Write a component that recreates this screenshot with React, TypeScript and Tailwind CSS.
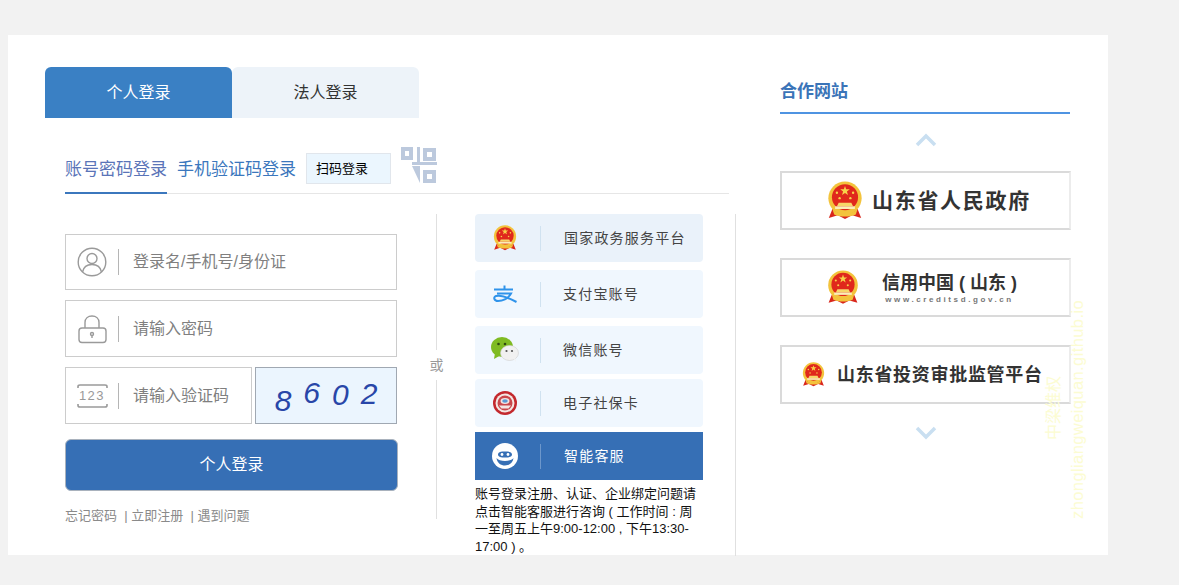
import type { ReactNode } from 'react';

const font = { fontFamily: '"Liberation Sans", "Noto Sans CJK SC", sans-serif' };

function Emblem({ size }: { size: number }) {
  return (
    <svg width={size} height={size * 1.08} viewBox="0 0 40 43">
      <path d="M6 31 L2 41 L12 38 L20 42 L28 38 L38 41 L34 31 Z" fill="#d9261c" />
      <circle cx="20" cy="19" r="18.5" fill="#f3c33c" />
      <circle cx="20" cy="18" r="14.500" fill="#e0281c" />
      <path d="M20 5.500l1.300 3.700h4l-3.200 2.400 1.200 3.800-3.300-2.300-3.300 2.300 1.200-3.800-3.200-2.400h4z" fill="#f7d24a" />
      <circle cx="11" cy="13" r="1.300" fill="#f7d24a" />
      <circle cx="29" cy="13" r="1.300" fill="#f7d24a" />
      <circle cx="14" cy="19" r="1.300" fill="#f7d24a" />
      <circle cx="26" cy="19" r="1.300" fill="#f7d24a" />
      <path d="M11 28 L13 24 H27 L29 28 Z" fill="#f6d76a" />
      <rect x="9" y="28" width="22" height="3" fill="#fbeeb8" />
      <path d="M6 31 C12 38 28 38 34 31 L32 37 C26 40 14 40 8 37 Z" fill="#f3c33c" />
    </svg>
  );
}

function UserIcon() {
  return (
    <svg width="30" height="30" viewBox="0 0 30 30" fill="none" stroke="#9a9a9a" strokeWidth="1.400">
      <circle cx="15" cy="15" r="13.800" />
      <circle cx="15" cy="11.500" r="5" />
      <path d="M5.500 25c1-5 5-7.500 9.500-7.500s8.500 2.500 9.500 7.500" />
    </svg>
  );
}

function LockIcon() {
  return (
    <svg width="30" height="30" viewBox="0 0 30 30" fill="none" stroke="#9a9a9a" strokeWidth="1.400">
      <path d="M8 14V8.500C8 4.500 11 2 15 2s7 2.500 7 6.500V14" />
      <rect x="2" y="14" width="27" height="14.500" rx="3" />
      <circle cx="15" cy="20" r="1.500" />
      <path d="M15 21.500V24" />
    </svg>
  );
}

function CodeIcon() {
  return (
    <div className="relative flex h-[24px] w-[31px] items-center justify-center">
      <svg className="absolute inset-0" width="31" height="24" viewBox="0 0 31 24" fill="none" stroke="#9a9a9a" strokeWidth="1.600">
        <path d="M1 4V2.500Q1 1 3 1H28Q30 1 30 2.500V4" />
        <path d="M1 20V21.500Q1 23 3 23H28Q30 23 30 21.500V20" />
      </svg>
      <span className="text-[13px] leading-none tracking-[1.500px] text-[#999999]">123</span>
    </div>
  );
}

function QrIcon() {
  return (
    <svg width="36" height="36" viewBox="0 0 36 36" fill="#bcc9dd">
      <path d="M0 0H12V13H0ZM4 4V9H8V4Z" fillRule="evenodd" />
      <path d="M16 0H19V15H36V18H11V15H16Z" />
      <path d="M22 1H35V14H22ZM26 5V10H31V5Z" fillRule="evenodd" />
      <path d="M11 19H19V36Z" />
      <path d="M22 23H35V36H22ZM26 27V32H31V27Z" fillRule="evenodd" />
    </svg>
  );
}

function AlipayIcon() {
  return (
    <svg width="24" height="18" viewBox="0 0 24 18" fill="none" stroke="#2f93ea" strokeWidth="2">
      <path d="M1 4.500H20" />
      <path d="M11.500 0.500V5" />
      <path d="M4 8.500H18C15 14 9 16 5 16C1 16 0 12 3 11C8 9.500 16 13 23.500 17" />
    </svg>
  );
}

function WechatIcon() {
  return (
    <svg width="28" height="26" viewBox="0 0 28 26">
      <ellipse cx="11" cy="10" rx="11" ry="10" fill="#7fbb22" />
      <path d="M4 16L3 22L10 18Z" fill="#7fbb22" />
      <circle cx="7.500" cy="7" r="1.300" fill="#2f4a10" />
      <circle cx="14" cy="7" r="1.300" fill="#2f4a10" />
      <ellipse cx="18.500" cy="16" rx="9" ry="7.500" fill="#f1f1f1" stroke="#d0d0d0" strokeWidth="0.600" />
      <path d="M22 21L25 25L24 19Z" fill="#f1f1f1" />
      <circle cx="15.500" cy="14" r="1.100" fill="#555555" />
      <circle cx="21" cy="14" r="1.100" fill="#555555" />
    </svg>
  );
}

function SocialCardIcon() {
  return (
    <svg width="24" height="24" viewBox="0 0 24 24">
      <circle cx="12" cy="12" r="12" fill="#c3282d" />
      <circle cx="12" cy="12" r="9.500" fill="#f4e6e2" />
      <circle cx="12" cy="12" r="7.500" fill="#c9474b" />
      <ellipse cx="12" cy="10" rx="4.500" ry="3" fill="#f4e6e2" />
      <ellipse cx="12" cy="10" rx="2.800" ry="1.800" fill="#5b9bd5" />
      <path d="M6 14.500H18L15.500 17.500H8.500Z" fill="#f4e6e2" />
    </svg>
  );
}

function ServiceIcon() {
  return (
    <svg width="26" height="26" viewBox="0 0 26 26">
      <circle cx="13" cy="13" r="13" fill="#ffffff" />
      <path d="M4.500 15C5 20 9 22.500 13 22.500S21 20 21.500 15C19 19 7 19 4.500 15Z" fill="#366fb5" />
      <path d="M6 11.500C6 9 9 8.500 13 8.500S20 9 20 11.500S17 14.500 13 14.500S6 14 6 11.500Z" fill="#366fb5" />
      <circle cx="10" cy="11.500" r="1.400" fill="#ffffff" />
      <circle cx="16" cy="11.500" r="1.400" fill="#ffffff" />
    </svg>
  );
}

function Field({ icon, label, width, height }: { icon: ReactNode; label: string; width: string; height: string }) {
  return (
    <div className={`flex items-center border border-[#cccccc] bg-white ${height} ${width}`}>
      <div className="flex w-[52px] justify-center">{icon}</div>
      <div className="h-[26px] w-px bg-[#b5b5b5]" />
      <span className="ml-[14px] text-base text-[#807f7f]">{label}</span>
    </div>
  );
}

function Provider({ icon, label, pad, active, top }: { icon: ReactNode; label: string; pad: string; active?: boolean; top?: boolean }) {
  const bg = active ? 'bg-[#366fb5] text-white' : top ? 'bg-[#eaf2fa] rounded text-[#444444]' : 'bg-[#f0f7fe] rounded text-[#444444]';
  return (
    <div className={`flex h-[48px] items-center ${bg}`}>
      <div className="flex w-[65px] justify-center pr-[5px]">{icon}</div>
      <div className={`h-[25px] w-px ${active ? 'bg-[#6d97cb]' : 'bg-[#d0e2f0]'}`} />
      <span className={`text-sm tracking-[1.2px] ${pad}`}>{label}</span>
    </div>
  );
}

function Chevron({ up }: { up?: boolean }) {
  return (
    <svg width="22" height="14" viewBox="0 0 22 14" fill="none" stroke="#c9dff1" strokeWidth="3.500">
      <path d={up ? 'M2 12L11 3L20 12' : 'M2 2L11 11L20 2'} />
    </svg>
  );
}

function Partner({ children }: { children: ReactNode }) {
  return (
    <div className="flex h-[59px] w-[291px] items-center border-2 border-[#dadada] border-r-[#ececec] bg-white">
      {children}
    </div>
  );
}

export default function App() {
  return (
    <div className="relative h-[585px] w-[1179px] overflow-hidden bg-[#f2f2f2] pt-[35px] pl-2" style={font}>
      <div className="relative flex h-[520px] w-[1100px] bg-white pt-8 pl-[37px]">
        {/* Login */}
        <div className="w-[691px]">
          <div className="flex h-[51px] w-[374px]">
            <div className="flex w-[187px] items-center justify-center rounded-t-md bg-[#3a80c4] text-base text-white">个人登录</div>
            <div className="flex w-[187px] items-center justify-center rounded-t-md bg-[#edf3f9] text-base text-[#333333]">法人登录</div>
          </div>

          <div className="ml-5 mt-[27px] flex h-[49px] w-[664px] items-start border-b border-[#e6e6e6]">
            <div className="mt-[12px] h-[37px] w-[102px] border-b-2 border-[#3b77bd] pt-px text-[17px] leading-[24px] text-[#5a74b8]">账号密码登录</div>
            <div className="ml-[10px] mt-[13px] text-[17px] leading-[24px] text-[#3b77bd]">手机验证码登录</div>
            <div className="ml-[10px] mt-[8px] flex h-[31px] w-[85px] items-center border border-[#e1e6ec] bg-[#ebf6fe] pl-[9px] text-[13px] text-black">扫码登录</div>
            <div className="ml-[10px] mt-[2px]"><QrIcon /></div>
          </div>

          <div className="ml-5 mt-[20px] flex h-[342px]">
            <div className="w-[333px] pt-[20px]">
              <div className="flex flex-col gap-[10px]">
                <Field icon={<UserIcon />} label="登录名/手机号/身份证" width="w-[332px]" height="h-[56px]" />
                <Field icon={<LockIcon />} label="请输入密码" width="w-[332px]" height="h-[57px]" />
                <div className="flex gap-[3px]">
                  <Field icon={<CodeIcon />} label="请输入验证码" width="w-[187px]" height="h-[57px]" />
                  <div className="flex h-[57px] w-[142px] items-center justify-center gap-[12px] border border-[#a0a8b2] bg-[#ebf5fe] text-[30px] italic text-[#2846a8]">
                    <span className="translate-y-[5px]">8</span>
                    <span className="-translate-y-[3px]">6</span>
                    <span className="-translate-y-[1px]">0</span>
                    <span className="-translate-y-[2px]">2</span>
                  </div>
                </div>
              </div>
              <button className="mt-[15px] h-[52px] w-[333px] rounded-md border border-[#a9b2bd] bg-[#366fb5] text-base text-white">个人登录</button>
              <div className="mt-[15px] text-[13px] text-[#8a8a8a]">忘记密码 &nbsp;| 立即注册 &nbsp;| 遇到问题</div>
            </div>

            <div className="ml-[38px] flex h-[305px] w-px flex-col items-center bg-[#e0e0e0]">
              <span className="mt-[136px] whitespace-nowrap bg-white py-[5px] text-sm text-[#999999]">或</span>
            </div>

            <div className="ml-[38px] w-[228px]">
              <Provider top icon={<Emblem size={24} />} label="国家政务服务平台" pad="ml-[23px]" />
              <div className="mt-2"><Provider icon={<AlipayIcon />} label="支付宝账号" pad="ml-[22px]" /></div>
              <div className="mt-2"><Provider icon={<WechatIcon />} label="微信账号" pad="ml-[22px]" /></div>
              <div className="mt-[5px]"><Provider icon={<SocialCardIcon />} label="电子社保卡" pad="ml-[22px]" /></div>
              <div className="mt-[5px]"><Provider active icon={<ServiceIcon />} label="智能客服" pad="ml-[23px]" /></div>
              <p className="mt-[5px] w-[224px] text-[13px] leading-[17.5px] text-[#111111]">账号登录注册、认证、企业绑定问题请点击智能客服进行咨询 ( 工作时间 : 周一至周五上午9:00-12:00 , 下午13:30-17:00 ) 。</p>
            </div>

            <div className="ml-[32px] w-px bg-[#e0e0e0]" />
          </div>
        </div>

        {/* Partner sites */}
        <div className="ml-[44px] w-[291px]">
          <div className="mt-[8px] h-[39px] w-[290px] border-b-2 border-[#4f94e2] pt-[2px] text-[17px] leading-[29px] font-bold text-[#3b74b8]">合作网站</div>
          <div className="mt-[19px] ml-px flex w-[290px] justify-center"><Chevron up /></div>
          <div className="mt-[24px] flex flex-col gap-[28px]">
            <Partner>
              <div className="ml-[45px]"><Emblem size={36} /></div>
              <span className="ml-[9px] text-[21px] font-bold tracking-[1.7px] whitespace-nowrap text-[#333333]">山东省人民政府</span>
            </Partner>
            <Partner>
              <div className="ml-[45px]"><Emblem size={32} /></div>
              <div className="ml-[23px] flex flex-col items-center">
                <span className="text-lg leading-[24px] font-bold whitespace-nowrap text-[#333333]">信用中国 ( 山东 )</span>
                <span className="text-[8px] leading-[10px] font-bold tracking-[2.6px] whitespace-nowrap text-[#777777]">www.creditsd.gov.cn</span>
              </div>
            </Partner>
            <Partner>
              <div className="ml-[20px]"><Emblem size={23} /></div>
              <span className="ml-[12px] text-lg font-bold tracking-[0.7px] whitespace-nowrap text-[#333333]">山东省投资审批监管平台</span>
            </Partner>
          </div>
          <div className="mt-[22px] ml-px flex w-[290px] justify-center"><Chevron /></div>
        </div>

        {/* Watermark */}
        <div className="absolute left-[1057px] top-[484px] origin-top-left -rotate-90 whitespace-nowrap text-[16.5px] tracking-[0.4px] text-[#fcfcd2]">zhongliangweiquan.github.io</div>
        <div className="absolute left-[1034px] top-[405px] origin-top-left -rotate-90 whitespace-nowrap text-base text-[#fcfcd2]">中梁维权</div>
      </div>
    </div>
  );
}
